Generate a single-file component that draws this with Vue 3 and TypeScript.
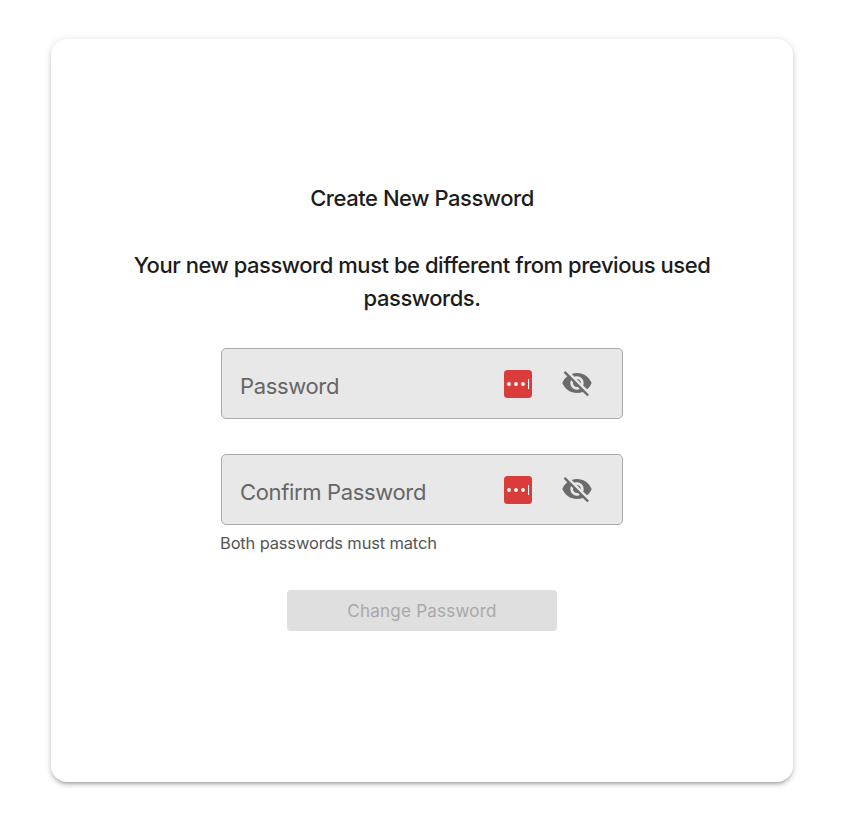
<script setup lang="ts">
const fields = [
  { id: 'password', label: 'Password' },
  { id: 'confirm', label: 'Confirm Password' },
]
</script>

<template>
  <main class="page">
    <section class="card">
      <h1 class="title">Create New Password</h1>
      <p class="subtitle">Your new password must be different from previous used passwords.</p>
      <div class="form">
        <div v-for="f in fields" :key="f.id" class="field">
          <span class="label">{{ f.label }}</span>
          <span class="lastpass">
            <svg width="28" height="28" viewBox="0 0 28 28">
              <rect width="28" height="28" rx="3.5" fill="#d93c3a" />
              <circle cx="5" cy="14" r="1.9" fill="#fff" />
              <circle cx="12" cy="14" r="1.9" fill="#fff" />
              <circle cx="19" cy="14" r="1.9" fill="#fff" />
              <rect x="24" y="9" width="1.1" height="10" fill="#fff" />
            </svg>
          </span>
          <svg class="eye" width="32" height="32" viewBox="0 0 24 24" fill="#6b6b6b">
            <path d="M12 7c2.76 0 5 2.24 5 5 0 .65-.13 1.26-.36 1.83l2.92 2.92c1.51-1.26 2.7-2.89 3.43-4.75-1.73-4.39-6-7.5-11-7.5-1.4 0-2.74.25-3.98.7l2.16 2.16C10.74 7.13 11.35 7 12 7zM2 4.27l2.28 2.28.46.46C3.08 8.3 1.78 10.02 1 12c1.73 4.39 6 7.5 11 7.5 1.55 0 3.03-.3 4.38-.84l.42.42L19.73 22 21 20.73 3.27 3 2 4.27zM7.53 9.8l1.55 1.55c-.05.21-.08.43-.08.65 0 1.66 1.34 3 3 3 .22 0 .44-.03.65-.08l1.55 1.55c-.67.33-1.41.53-2.2.53-2.76 0-5-2.24-5-5 0-.79.2-1.53.53-2.2zm4.31-.78l3.15 3.15.02-.16c0-1.66-1.34-3-3-3l-.17.01z" />
          </svg>
        </div>
        <p class="helper">Both passwords must match</p>
      </div>
      <button class="submit" disabled>Change Password</button>
    </section>
  </main>
</template>

<style>
html, body { margin: 0; background: #fff; }
</style>

<style scoped>
.page {
  width: 855px;
  height: 818px;
  box-sizing: border-box;
  padding: 39px 62px 36px 51px;
  font-family: "Inter", "Noto Sans", sans-serif;
}
.card {
  height: 743px;
  box-sizing: border-box;
  padding-top: 144px;
  display: flex;
  flex-direction: column;
  align-items: center;
  border-radius: 16px;
  background: #fff;
  box-shadow: 0 3px 3px -2px rgba(0,0,0,.2), 0 3px 4px 0 rgba(0,0,0,.14), 0 1px 8px 0 rgba(0,0,0,.12);
}
.title {
  margin: 0;
  font-size: 22px;
  line-height: 30px;
  font-weight: 500;
  letter-spacing: -0.45px;
  color: #1c1c1c;
}
.subtitle {
  margin: 36px 0 0;
  width: 600px;
  text-align: center;
  font-size: 22px;
  line-height: 33px;
  font-weight: 500;
  letter-spacing: -0.46px;
  color: #1c1c1c;
}
.form {
  width: 402px;
  margin-top: 33px;
  display: flex;
  flex-direction: column;
  gap: 35px;
}
.field {
  height: 71px;
  box-sizing: border-box;
  display: flex;
  align-items: center;
  padding: 0 29px 0 18px;
  border: 1px solid #a9a9a9;
  border-radius: 5px;
  background: #e8e8e8;
}
.label {
  flex: 1;
  font-size: 22px;
  line-height: 28px;
  margin-top: 4px;
  letter-spacing: -0.35px;
  color: #666;
}
.lastpass {
  display: flex;
  margin-right: 29px;
}
.eye {
  display: block;
  margin-top: -2px;
}
.helper {
  margin: -27px 0 0 -1px;
  font-size: 16.5px;
  line-height: 20px;
  letter-spacing: -0.17px;
  color: #555;
}
.submit {
  margin-top: 37px;
  width: 270px;
  height: 41px;
  border: none;
  border-radius: 4px;
  background: #dfdfdf;
  color: #a8a8a8;
  font-family: inherit;
  font-size: 17px;
  letter-spacing: 0.23px;
}
</style>
